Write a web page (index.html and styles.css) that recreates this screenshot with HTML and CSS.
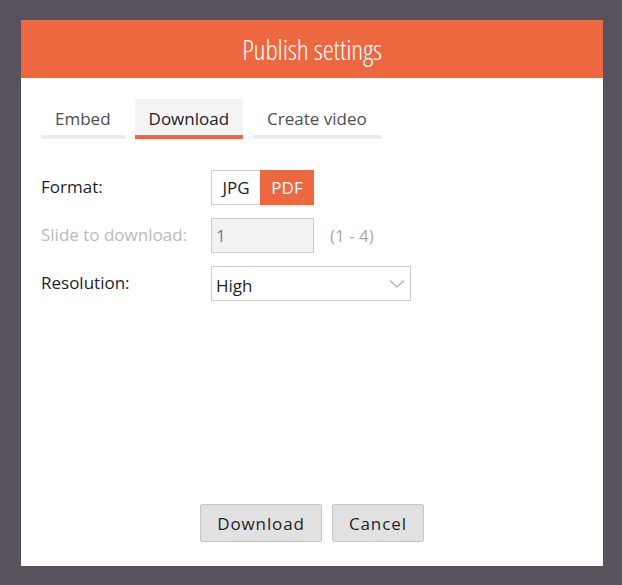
FILE: index.html
```html
<!DOCTYPE html>
<html>
<head>
<meta charset="utf-8">
<link rel="stylesheet" href="styles.css">
</head>
<body>
<div class="dialog">
  <div class="header">Publish settings</div>
  <div class="content">
    <div class="tabs">
      <div class="tab">Embed</div>
      <div class="tab active">Download</div>
      <div class="tab">Create video</div>
    </div>
    <div class="form">
      <div class="row">
        <div class="label">Format:</div>
        <div class="toggle">
          <div class="opt">JPG</div>
          <div class="opt on">PDF</div>
        </div>
      </div>
      <div class="row">
        <div class="label disabled">Slide to download:</div>
        <div class="input">1</div>
        <div class="range">(1 - 4)</div>
      </div>
      <div class="row">
        <div class="label">Resolution:</div>
        <div class="select">
          <span>High</span>
          <svg class="chev" width="16" height="10" viewBox="0 0 16 10"><path d="M1 1.5 L8 8 L15 1.5" fill="none" stroke="#b5b5b8" stroke-width="1.4"/></svg>
        </div>
      </div>
    </div>
    <div class="actions">
      <button class="btn">Download</button>
      <button class="btn">Cancel</button>
    </div>
  </div>
</div>
</body>
</html>
```
FILE: styles.css
```css
html, body {
  margin: 0;
  padding: 0;
  background: #57525c;
  width: 622px;
  height: 585px;
  overflow: hidden;
}
body {
  padding: 20px 0 0 21px;
  box-sizing: border-box;
  font-family: "Open Sans", "Liberation Sans", sans-serif;
}
.dialog {
  width: 582px;
  height: 546px;
  background: #fff;
  display: flex;
  flex-direction: column;
}
.header {
  height: 58px;
  background: #ec6841;
  color: #fff;
  font-family: "Open Sans", sans-serif;
  font-stretch: 75%;
  font-weight: 300;
  font-size: 28px;
  line-height: 58px;
  text-align: center;
  letter-spacing: -0.1px;
}
.content {
  flex: 1;
  padding: 21px 20px 24px 20px;
  display: flex;
  flex-direction: column;
}
.tabs {
  display: flex;
  gap: 10px;
}
.tab {
  height: 36px;
  line-height: 39px;
  font-size: 17px;
  color: #4e4e55;
  padding: 0 14px;
  border-bottom: 4px solid #ececec;
}
.tab.active {
  background: #f4f4f4;
  color: #1e1e28;
  border-bottom-color: #ec6841;
}
.form {
  margin-top: 31px;
  display: flex;
  flex-direction: column;
  gap: 13px;
}
.row {
  display: flex;
  align-items: center;
  height: 35px;
}
.label {
  width: 170px;
  font-size: 17px;
  color: #1e1e28;
  margin-top: -3px;
}
.label.disabled {
  color: #b9b9be;
}
.toggle {
  display: flex;
  height: 35px;
}
.opt {
  box-sizing: border-box;
  height: 35px;
  line-height: 33px;
  font-size: 17px;
  width: 49px;
  text-align: center;
  border: 1px solid #ccc;
  border-right: none;
  color: #1e1e28;
}
.opt.on {
  background: #ec6841;
  border: 1px solid #ec6841;
  color: #fff;
  width: 54px;
}
.input {
  box-sizing: border-box;
  width: 103px;
  height: 35px;
  background: #f2f2f2;
  border: 1px solid #ccc;
  color: #7a7a85;
  font-size: 17px;
  line-height: 33px;
  padding-left: 4px;
}
.range {
  margin-left: 16px;
  color: #aaa;
  font-size: 17px;
}
.select {
  box-sizing: border-box;
  width: 200px;
  height: 35px;
  border: 1px solid #ccc;
  display: flex;
  align-items: center;
  justify-content: space-between;
  padding: 3px 5px 0 4px;
  font-size: 17px;
  color: #1e1e28;
}
.chev {
  margin-top: -2px;
}
.actions {
  margin-top: auto;
  display: flex;
  justify-content: center;
  gap: 10px;
}
.btn {
  box-sizing: border-box;
  height: 38px;
  background: #e1e1e1;
  border: 1px solid #c6c6c6;
  border-radius: 2px;
  font-family: "Open Sans", sans-serif;
  font-size: 17px;
  letter-spacing: 0.9px;
  color: #1e1e28;
  padding: 0 16px;
}
```
